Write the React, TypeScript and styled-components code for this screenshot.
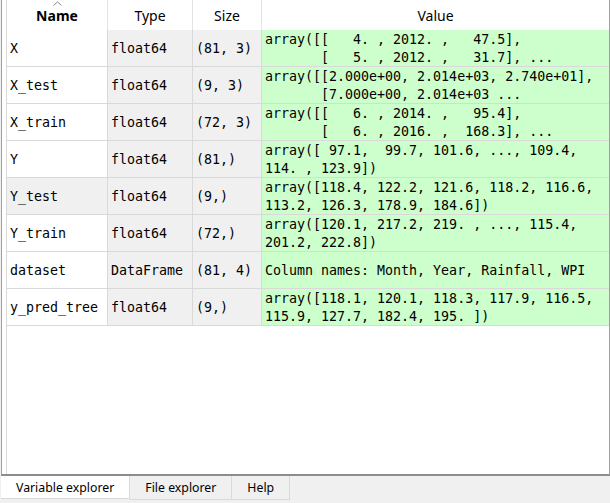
import React from "react";
import styled, { createGlobalStyle } from "styled-components";

const GlobalStyle = createGlobalStyle`
  html, body { margin: 0; padding: 0; }
  body {
    background: #f0f0f0;
    overflow: hidden;
    font-family: "Noto Sans", "Open Sans", sans-serif;
  }
`;

const Page = styled.div`
  width: 610px;
  height: 503px;
  display: flex;
  flex-direction: column;
  background: #f0f0f0;
`;

const Frame = styled.div`
  box-sizing: border-box;
  margin-left: 1px;
  width: 609px;
  height: 476px;
  background: #ffffff;
  border-left: 1px solid #a0a0a0;
  border-right: 1px solid #a0a0a0;
  border-bottom: 2px solid #8c8c8c;
  padding-left: 4px;
  display: flex;
`;

const Viewport = styled.div`
  flex: 1;
  border-left: 1px solid #d9d9d9;
  display: flex;
  flex-direction: column;
`;

const Table = styled.div`
  display: grid;
  grid-template-columns: 101px 85px 69px 1fr;
`;

const HeaderCell = styled.div<{ $last?: boolean; $bold?: boolean }>`
  position: relative;
  box-sizing: border-box;
  height: 30px;
  display: flex;
  align-items: center;
  justify-content: center;
  background: #ffffff;
  border-right: ${(p) => (p.$last ? "none" : "1px solid #e3e3e3")};
  font-family: "Noto Sans", "Open Sans", sans-serif;
  font-size: 14px;
  font-weight: ${(p) => (p.$bold ? 700 : 400)};
  color: #000;
  padding-top: 1px;
`;

const SortArrow = styled.svg`
  position: absolute;
  top: 1px;
  left: 46px;
`;

type Tone = "white" | "grey" | "green";
const toneColor: Record<Tone, string> = {
  white: "#ffffff",
  grey: "#f0f0f0",
  green: "#ccffcc",
};

const Cell = styled.div<{ $tone: Tone; $last?: boolean }>`
  box-sizing: border-box;
  height: 37px;
  display: flex;
  align-items: center;
  padding: 2px 0 0 3px;
  background: ${(p) => toneColor[p.$tone]};
  border-bottom: 1px solid #d9d9d9;
  border-right: ${(p) => (p.$last ? "none" : "1px solid #d9d9d9")};
  font-family: "DejaVu Sans Mono", "Liberation Mono", monospace;
  font-size: 13.3px;
  line-height: 18px;
  color: #000;
  white-space: pre;
  overflow: hidden;
`;

const TabBar = styled.div`
  display: flex;
  align-items: flex-start;
  padding-left: 1px;
  height: 27px;
`;

const Tab = styled.div<{ $active?: boolean }>`
  box-sizing: border-box;
  height: ${(p) => (p.$active ? "23px" : "24px")};
  padding: 0 15px;
  display: flex;
  align-items: center;
  background: ${(p) => (p.$active ? "#ffffff" : "#f0f0f0")};
  border-right: 1px solid #d9d9d9;
  border-bottom: 1px solid #d9d9d9;
  font-family: "Noto Sans", "Open Sans", sans-serif;
  font-size: 12.3px;
  color: #000;
  white-space: nowrap;
`;

type Row = { name: string; type: string; size: string; value: string; hl?: boolean };

const rows: Row[] = [
  {
    name: "X",
    type: "float64",
    size: "(81, 3)",
    value: "array([[   4. , 2012. ,   47.5],\n       [   5. , 2012. ,   31.7], ...",
  },
  {
    name: "X_test",
    type: "float64",
    size: "(9, 3)",
    value: "array([[2.000e+00, 2.014e+03, 2.740e+01],\n       [7.000e+00, 2.014e+03 ...",
  },
  {
    name: "X_train",
    type: "float64",
    size: "(72, 3)",
    value: "array([[   6. , 2014. ,   95.4],\n       [   6. , 2016. ,  168.3], ...",
  },
  {
    name: "Y",
    type: "float64",
    size: "(81,)",
    value: "array([ 97.1,  99.7, 101.6, ..., 109.4,\n114. , 123.9])",
  },
  {
    name: "Y_test",
    type: "float64",
    size: "(9,)",
    value: "array([118.4, 122.2, 121.6, 118.2, 116.6,\n113.2, 126.3, 178.9, 184.6])",
    hl: true,
  },
  {
    name: "Y_train",
    type: "float64",
    size: "(72,)",
    value: "array([120.1, 217.2, 219. , ..., 115.4,\n201.2, 222.8])",
  },
  {
    name: "dataset",
    type: "DataFrame",
    size: "(81, 4)",
    value: "Column names: Month, Year, Rainfall, WPI",
  },
  {
    name: "y_pred_tree",
    type: "float64",
    size: "(9,)",
    value: "array([118.1, 120.1, 118.3, 117.9, 116.5,\n115.9, 127.7, 182.4, 195. ])",
  },
];

export default function App() {
  return (
    <>
      <GlobalStyle />
      <Page>
        <Frame>
          <Viewport>
            <Table>
              <HeaderCell $bold>
                <SortArrow width="9" height="5" viewBox="0 0 9 5">
                  <path d="M0.5 4.5 L4.5 0.8 L8.5 4.5" fill="none" stroke="#8a8a8a" strokeWidth="1" />
                </SortArrow>
                Name
              </HeaderCell>
              <HeaderCell>Type</HeaderCell>
              <HeaderCell>Size</HeaderCell>
              <HeaderCell $last>Value</HeaderCell>
              {rows.map((r) => (
                <React.Fragment key={r.name}>
                  <Cell $tone={r.hl ? "grey" : "white"}>{r.name}</Cell>
                  <Cell $tone="grey">{r.type}</Cell>
                  <Cell $tone="grey">{r.size}</Cell>
                  <Cell $tone="green" $last>
                    {r.value}
                  </Cell>
                </React.Fragment>
              ))}
            </Table>
          </Viewport>
        </Frame>
        <TabBar>
          <Tab $active>Variable explorer</Tab>
          <Tab>File explorer</Tab>
          <Tab>Help</Tab>
        </TabBar>
      </Page>
    </>
  );
}
